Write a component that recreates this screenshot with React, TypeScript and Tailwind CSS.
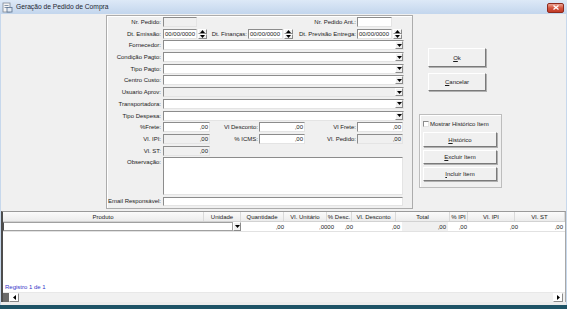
import React from "react";

const sunken =
  "border border-t-[#8c8c8c] border-l-[#8c8c8c] border-b-[#e4e4e4] border-r-[#e4e4e4]";
const raised =
  "border border-t-[#ffffff] border-l-[#ffffff] border-b-[#8a8a8a] border-r-[#8a8a8a]";

function Down() {
  return (
    <svg width="5" height="3" viewBox="0 0 5 3">
      <polygon points="0,0 5,0 2.5,3" fill="#000" />
    </svg>
  );
}

function Up() {
  return (
    <svg width="5" height="3" viewBox="0 0 5 3">
      <polygon points="0,3 5,3 2.5,0" fill="#000" />
    </svg>
  );
}

function Label({ children, className }: { children: React.ReactNode; className: string }) {
  return <div className={`${className} shrink-0 text-right pr-[1px] whitespace-nowrap`}>{children}</div>;
}

function Box({ className, gray, value }: { className: string; gray?: boolean; value?: string }) {
  return (
    <div
      className={`${className} h-full shrink-0 ${sunken} ${gray ? "bg-[#f0f0f0]" : "bg-white"} flex items-center justify-end pr-[1px]`}
    >
      {value}
    </div>
  );
}

function DateBox({ className }: { className: string }) {
  return (
    <div className={`${className} h-full shrink-0 ${sunken} bg-white flex items-center pl-[1px]`}>00/00/0000</div>
  );
}

function Spin() {
  return (
    <div className="w-[9px] h-full ml-[1px] shrink-0 flex flex-col">
      <div className={`flex-1 ${raised} bg-[#f0f0f0] flex items-center justify-center`}>
        <Up />
      </div>
      <div className={`flex-1 ${raised} bg-[#f0f0f0] flex items-center justify-center`}>
        <Down />
      </div>
    </div>
  );
}

function Combo({ gray }: { gray?: boolean }) {
  return (
    <div className={`w-[241px] h-full shrink-0 ${sunken} ${gray ? "bg-[#f0f0f0]" : "bg-white"} flex justify-end`}>
      <div className={`w-[8px] h-full ${raised} bg-[#f0f0f0] flex items-center justify-center`}>
        <Down />
      </div>
    </div>
  );
}

function Btn({ className, children }: { className: string; children: React.ReactNode }) {
  return (
    <div
      className={`${className} shrink-0 bg-[#f0f0f0] border border-t-white border-l-white border-b-[#7a7a7a] border-r-[#7a7a7a] shadow-[1px_1px_0_#b0b0b0] flex items-center justify-center text-[6px]`}
    >
      {children}
    </div>
  );
}

const combos = [
  { label: "Fornecedor:" },
  { label: "Condição Pagto:" },
  { label: "Tipo Pagto:" },
  { label: "Centro Custo:" },
  { label: "Usuario Aprov:", gray: true },
  { label: "Transportadora:" },
  { label: "Tipo Despesa:" },
];

const headers = [
  { name: "Produto", w: "w-[201px]" },
  { name: "Unidade", w: "w-[37px]" },
  { name: "Quantidade", w: "w-[43px]" },
  { name: "Vl. Unitário", w: "w-[43px]" },
  { name: "% Desc.", w: "w-[25px]" },
  { name: "Vl. Desconto", w: "w-[44px]" },
  { name: "Total", w: "w-[54px]" },
  { name: "% IPI", w: "w-[18px]" },
  { name: "Vl. IPI", w: "w-[47px]" },
  { name: "Vl. ST", w: "flex-1" },
];

const cells = [
  { v: ",00", w: "w-[45px]" },
  { v: ",0000", w: "w-[50px]" },
  { v: ",00", w: "w-[19px]" },
  { v: ",00", w: "w-[47px]" },
  { v: ",00", w: "w-[46px]", gray: true },
  { v: ",00", w: "w-[21px]" },
  { v: ",00", w: "w-[51px]" },
  { v: ",00", w: "flex-1" },
];

export default function App() {
  return (
    <div className="w-[567px] h-[309px] overflow-hidden bg-[#c7d8ec] flex flex-col font-['Liberation_Sans',Arial,sans-serif] text-[#1a1a1a] text-[6px] leading-none">
      {/* title bar */}
      <div className="h-[14px] shrink-0 flex items-center bg-linear-to-b from-[#dde9f7] to-[#c3d6ed]">
        <svg className="ml-[2px] mt-[1px]" width="11" height="11" viewBox="0 0 11 11">
          <rect x="1" y="1" width="7" height="9" fill="#f4f4f4" stroke="#7d8794" strokeWidth="0.8" />
          <rect x="2.5" y="3" width="4" height="0.8" fill="#6a7e98" />
          <rect x="2.5" y="5" width="4" height="0.8" fill="#6a7e98" />
          <rect x="5" y="5.5" width="5" height="4.5" fill="#e0e8f2" stroke="#58708f" strokeWidth="0.8" />
        </svg>
        <span className="ml-[3px] text-[6.7px] text-[#1e2630]">Geração de Pedido de Compra</span>
        <div className="ml-auto mr-[3px] mt-[1px] w-[17px] h-[10px] rounded-[2px] border border-[#8d2a1e] bg-linear-to-b from-[#e9a394] via-[#d4543e] to-[#c23a27] flex items-center justify-center">
          <svg width="6" height="5" viewBox="0 0 6 5">
            <path d="M0.5 0.5 L5.5 4.5 M5.5 0.5 L0.5 4.5" stroke="#fff" strokeWidth="1.3" />
          </svg>
        </div>
      </div>

      {/* body */}
      <div className="mx-[1px] h-[291px] shrink-0 bg-[#f0f0f0] flex flex-col">
        {/* top section */}
        <div className="h-[197px] shrink-0 flex">
          <div className="w-[105px] shrink-0" />
          {/* main panel */}
          <div className="w-[307px] h-[194px] mt-[1px] shrink-0 border border-[#acacac] shadow-[inset_1px_1px_0_#ffffff] flex flex-col gap-[1.7px] pt-[1px]">
            <div className="h-[10px] flex items-center">
              <Label className="w-[55px] mr-[1px]">Nr. Pedido:</Label>
              <Box className="w-[34px]" gray />
              <Label className="w-[160px]">Nr. Pedido Ant.:</Label>
              <Box className="w-[35px]" />
            </div>
            <div className="h-[10px] flex items-center">
              <Label className="w-[55px] mr-[1px]">Dt. Emissão:</Label>
              <DateBox className="w-[34px]" />
              <Spin />
              <Label className="w-[41px]">Dt. Finanças:</Label>
              <DateBox className="w-[35px]" />
              <Spin />
              <Label className="w-[64px]">Dt. Previsão Entrega:</Label>
              <DateBox className="w-[35px]" />
              <Spin />
            </div>
            {combos.map((c) => (
              <div key={c.label} className="h-[10px] flex items-center">
                <Label className="w-[55px] mr-[1px]">{c.label}</Label>
                <Combo gray={c.gray} />
              </div>
            ))}
            <div className="h-[10px] flex items-center">
              <Label className="w-[55px] mr-[1px]">%Frete:</Label>
              <Box className="w-[47px]" value=",00" />
              <Label className="w-[49px]">Vl Desconto:</Label>
              <Box className="w-[46px]" value=",00" />
              <Label className="w-[52px]">Vl Frete:</Label>
              <Box className="w-[46px]" value=",00" />
            </div>
            <div className="h-[10px] flex items-center">
              <Label className="w-[55px] mr-[1px]">Vl. IPI:</Label>
              <Box className="w-[47px]" gray value=",00" />
              <Label className="w-[49px]">% ICMS:</Label>
              <Box className="w-[46px]" value=",00" />
              <Label className="w-[52px]">Vl. Pedido:</Label>
              <Box className="w-[46px]" gray value=",00" />
            </div>
            <div className="h-[10px] flex items-center">
              <Label className="w-[55px] mr-[1px]">Vl. ST:</Label>
              <Box className="w-[47px]" gray value=",00" />
            </div>
            <div className="h-[38px] flex items-start">
              <Label className="w-[55px] mr-[1px] pt-[2px]">Observação:</Label>
              <div className={`w-[240px] h-full ${sunken} bg-white`} />
            </div>
            <div className="h-[9px] flex items-center">
              <Label className="w-[55px] mr-[1px]">Email Responsável:</Label>
              <div className={`w-[240px] h-full ${sunken} bg-white`} />
            </div>
          </div>

          {/* right column */}
          <div className="flex-1 flex flex-col">
            <Btn className="ml-[15px] mt-[34px] w-[58px] h-[19px]">
              <span>
                <span className="underline">O</span>k
              </span>
            </Btn>
            <Btn className="ml-[15px] mt-[6px] w-[58px] h-[18px]">
              <span>
                <span className="underline">C</span>ancelar
              </span>
            </Btn>
            <div className="ml-[6px] mt-[23px] w-[83px] h-[74px] border border-[#bdbdbd] shadow-[inset_1px_1px_0_#ffffff] flex flex-col px-[3px]">
              <div className="mt-[6px] flex items-center">
                <div className={`w-[6px] h-[6px] ${sunken} bg-white`} />
                <span className="ml-[1px]">Mostrar Histórico Item</span>
              </div>
              <Btn className="mt-[5px] w-[74px] h-[15px]">
                <span>
                  <span className="underline">H</span>istórico
                </span>
              </Btn>
              <Btn className="mt-[3px] w-[74px] h-[14px]">
                <span>
                  <span className="underline">E</span>xcluir Item
                </span>
              </Btn>
              <Btn className="mt-[3px] w-[74px] h-[14px]">
                <span>
                  <span className="underline">I</span>ncluir Item
                </span>
              </Btn>
            </div>
          </div>
        </div>

        {/* grid */}
        <div className="h-[91px] shrink-0 bg-white border-l-2 border-l-[#4d4d4d] border-t border-t-[#9a9a9a] border-r border-r-[#a8a8a8] flex flex-col">
          <div className="h-[10px] shrink-0 flex bg-linear-to-b from-[#fbfbfb] to-[#ececec] border-b border-b-[#d2d2d2]">
            {headers.map((h) => (
              <div
                key={h.name}
                className={`${h.w} shrink-0 h-full flex items-center justify-center border-r border-r-[#dadada] whitespace-nowrap`}
              >
                {h.name}
              </div>
            ))}
          </div>
          <div className="h-[10px] shrink-0 flex border-b border-b-[#e2e2e2]">
            <div className="w-[230px] h-full shrink-0 border border-[#a0a0a0] border-l-[#505050]" />
            <div className={`w-[8px] h-full shrink-0 ${raised} bg-[#f0f0f0] flex items-center justify-center`}>
              <Down />
            </div>
            {cells.map((c, i) => (
              <div
                key={i}
                className={`${c.w} shrink-0 h-full flex items-center justify-end pr-[2px] ${c.gray ? "bg-[#f0f0f0]" : ""}`}
              >
                {c.v}
              </div>
            ))}
          </div>
          <div className="flex-1 flex items-end pl-[2px] pb-[2px]">
            <span className="text-[#3535c8]">Registro 1 de 1</span>
          </div>
          <div className="h-[10px] shrink-0 flex items-center bg-[#f1f1f1] border-t border-t-[#e8e8e8]">
            <div className="w-[6px] h-full bg-[#6a6a6a]" />
            <div className={`w-[10px] h-[9px] ${raised} bg-white flex items-center justify-center`}>
              <svg width="3" height="5" viewBox="0 0 3 5">
                <polygon points="3,0 3,5 0,2.5" fill="#000" />
              </svg>
            </div>
            <div className="flex-1" />
            <div className={`w-[10px] h-[9px] mr-[2px] ${raised} bg-white flex items-center justify-center`}>
              <svg width="3" height="5" viewBox="0 0 3 5">
                <polygon points="0,0 0,5 3,2.5" fill="#000" />
              </svg>
            </div>
          </div>
        </div>
        <div className="flex-1 bg-[#ececec]" />
      </div>
      <div className="flex-1 bg-[#1e5366]" />
    </div>
  );
}
